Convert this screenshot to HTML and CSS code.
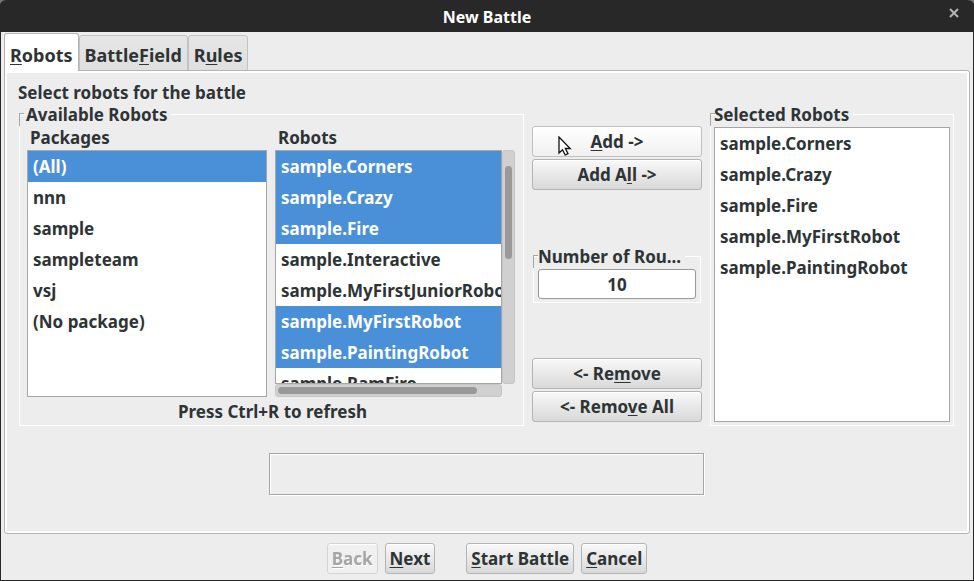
FILE: index.html
```html
<!DOCTYPE html>
<html lang="en">
<head>
<meta charset="utf-8">
<title>New Battle</title>
<link rel="stylesheet" href="styles.css">
</head>
<body>
<div class="window">
  <header class="titlebar">
    <h1 class="title">New Battle</h1>
    <button class="close" type="button" aria-label="Close">
      <svg width="10" height="10" viewBox="0 0 10 10"><path d="M1 1l8 8M9 1l-8 8" stroke="#b4b4b4" stroke-width="2" fill="none"/></svg>
    </button>
  </header>

  <nav class="tabs" role="tablist">
    <button class="tab tab-active" type="button" role="tab" aria-selected="true"><u>R</u>obots</button>
    <button class="tab" type="button" role="tab">Battle<u>F</u>ield</button>
    <button class="tab" type="button" role="tab">R<u>u</u>les</button>
  </nav>

  <main class="panel">
    <p class="prompt">Select robots for the battle</p>
    <div class="columns">
      <fieldset class="group available">
        <legend>Available Robots</legend>
        <div class="lists">
          <div class="list-column">
            <label for="packages">Packages</label>
            <select class="list packages" id="packages" multiple>
              <option selected>(All)</option>
              <option>nnn</option>
              <option>sample</option>
              <option>sampleteam</option>
              <option>vsj</option>
              <option>(No package)</option>
            </select>
          </div>
          <div class="list-column">
            <label for="robots">Robots</label>
            <div class="scroll-area">
              <select class="list" id="robots" multiple>
                <option selected>sample.Corners</option>
                <option selected>sample.Crazy</option>
                <option selected>sample.Fire</option>
                <option>sample.Interactive</option>
                <option>sample.MyFirstJuniorRobot</option>
                <option selected>sample.MyFirstRobot</option>
                <option selected>sample.PaintingRobot</option>
                <option>sample.RamFire</option>
              </select>
              <div class="track track-vertical"><div class="thumb"></div></div>
              <div class="track track-horizontal"><div class="thumb"></div></div>
            </div>
          </div>
        </div>
        <p class="hint">Press Ctrl+R to refresh</p>
      </fieldset>

      <div class="actions">
        <div class="button-stack">
          <button class="button button-hover" type="button"><u>A</u>dd -&gt;
            <svg class="pointer" width="14" height="20" viewBox="0 0 14 20"><path d="M1 1v16l3.500-3.200 2.700 5.200 2.800-1.300-2.600-5.200h4.800z" fill="#fff" stroke="#111" stroke-width="1.300"/></svg>
          </button>
          <button class="button" type="button">Add A<u>l</u>l -&gt;</button>
        </div>
        <fieldset class="group rounds">
          <legend><label for="rounds">Number of Rou...</label></legend>
          <input id="rounds" type="text" value="10">
        </fieldset>
        <div class="button-stack">
          <button class="button" type="button">&lt;- Re<u>m</u>ove</button>
          <button class="button" type="button">&lt;- Remo<u>v</u>e All</button>
        </div>
      </div>

      <fieldset class="group selected">
        <legend><label for="selected">Selected Robots</label></legend>
        <select class="list" id="selected" multiple>
          <option>sample.Corners</option>
          <option>sample.Crazy</option>
          <option>sample.Fire</option>
          <option>sample.MyFirstRobot</option>
          <option>sample.PaintingRobot</option>
        </select>
      </fieldset>
    </div>
    <div class="description"></div>
  </main>

  <footer class="footer">
    <button class="button" type="button" disabled><u>B</u>ack</button>
    <button class="button" type="button"><u>N</u>ext</button>
    <button class="button start" type="button"><u>S</u>tart Battle</button>
    <button class="button" type="button"><u>C</u>ancel</button>
  </footer>
</div>
</body>
</html>
```
FILE: styles.css
```css
* {
  box-sizing: border-box;
}

body {
  margin: 0;
  background: #777;
  color: #2e3436;
}

body,
button,
input,
select,
option {
  font: 700 17px/20px "Noto Sans", "Open Sans", sans-serif;
}

p,
h1 {
  margin: 0;
}

u {
  text-decoration-thickness: 1px;
  text-underline-offset: 2px;
  text-decoration-skip-ink: none;
}

.window {
  display: flex;
  flex-direction: column;
  min-height: 100vh;
  border: 1px solid #282828;
  border-top: 0;
  border-radius: 6px 6px 0 0;
  background: #ededed;
}

.titlebar {
  display: grid;
  grid-template-columns: 30px 1fr 30px;
  align-items: center;
  height: 32px;
  margin: 0 -1px;
  padding-top: 2px;
  border-radius: 6px 6px 0 0;
  background: #282828;
}

.title {
  grid-column: 2;
  color: #fff;
  font-size: 16px;
  line-height: 20px;
  text-align: center;
}

.close {
  display: flex;
  align-self: start;
  padding: 6px 5px;
  border: 0;
  background: none;
}

.tabs {
  display: flex;
  align-items: flex-end;
  height: 39px;
  padding: 0 3px;
}

.tab {
  height: 36px;
  padding: 8px 5px 4px;
  border: 1px solid #c2c2c2;
  border-radius: 3px 3px 0 0;
  background: linear-gradient(#e6e6e6, #dfdfdf);
  color: inherit;
  font-size: 18px;
}

.tab-active {
  z-index: 1;
  height: 38px;
  border-color: #b4b4b4;
  border-bottom: 0;
  background: #fff;
}

.panel {
  flex: 1;
  margin: -1px 3px 0;
  padding: 11px 15px 8px 13px;
  border: 1px solid #b4b4b4;
  border-radius: 0 3px 3px 3px;
  box-shadow: inset 0 0 0 2px #fff;
}

.prompt {
  padding-top: 1px;
}

.columns {
  display: grid;
  grid-template-columns: minmax(0, 505fr) 170px minmax(0, 244fr);
  gap: 8px;
  padding-left: 1px;
}

.group {
  position: relative;
  min-width: 0;
  margin: 0;
  padding: 0 4px 3px 6px;
  border: 1px solid #fff;
}

.group::before {
  position: absolute;
  top: -12px;
  left: -1px;
  width: 4px;
  height: 12px;
  border: solid #a6a6a6;
  border-width: 1px 0 0 1px;
  content: "";
}

legend {
  max-width: 100%;
  padding: 2px 4px 0 0;
  white-space: nowrap;
}

.lists {
  display: grid;
  grid-template-columns: minmax(0, 1fr) minmax(0, 1fr);
  gap: 8px;
  padding: 3px 4px 0 1px;
}

.list-column {
  display: flex;
  flex-direction: column;
  gap: 2px;
}

.list-column label {
  padding-left: 3px;
}

.list {
  flex: 1;
  width: 100%;
  min-width: 0;
  margin: 0;
  padding: 0;
  border: 1px solid #a6a6a6;
  border-radius: 0;
  outline: 0;
  overflow: hidden;
  background: #fff;
  color: inherit;
  scrollbar-width: none;
}

.list option {
  height: 31px;
  min-height: 31px;
  padding: 4px 5px;
}

.list option:checked {
  background: #4a90d9 linear-gradient(#4a90d9, #4a90d9);
  color: #fff;
}

.packages {
  height: 247px;
}

.scroll-area {
  display: grid;
  flex: 1;
  grid-template-rows: 234px 13px;
  grid-template-columns: minmax(0, 1fr) 13px;
}

.scroll-area .list {
  height: 100%;
}

.track {
  border: 1px solid #c6c6c6;
  border-radius: 3px;
  background: #d0d0d0;
}

.track-vertical {
  padding: 15px 2px 0;
}

.track-horizontal {
  padding: 2px 24px 2px 2px;
}

.thumb {
  height: 7px;
  border-radius: 4px;
  background: #999;
}

.track-vertical .thumb {
  height: 93px;
}

.hint {
  padding: 5px 0 0;
  text-align: center;
}

.actions {
  display: flex;
  flex-direction: column;
  justify-content: space-between;
  padding: 23px 0 4px;
}

.button-stack {
  display: flex;
  flex-direction: column;
  gap: 2px;
}

.button {
  position: relative;
  height: 31px;
  padding: 4px 4px;
  border: 1px solid #b4b4b4;
  border-radius: 3px;
  background: linear-gradient(#f8f8f8, #d9d9d9);
  box-shadow: inset 0 1px #fff;
  color: inherit;
  white-space: nowrap;
}

.button-hover {
  border-color: #c0c0c0;
  background: linear-gradient(#fff, #f0f0f0);
}

.button:disabled {
  border-color: #d4d4d4;
  background: #f0f0f0;
  color: #a6a6a6;
  text-shadow: 1px 1px #fff;
}

.pointer {
  position: absolute;
  top: 9px;
  left: 25px;
}

.rounds {
  margin: 0 1px;
  padding: 2px 4px 3px;
}

.rounds input {
  display: block;
  width: 100%;
  height: 30px;
  padding: 0;
  border: 1px solid #999;
  border-radius: 3px;
  background: #fff;
  color: inherit;
  text-align: center;
}

.selected {
  padding: 2px 3px 3px;
}

.selected .list {
  display: block;
  height: 295px;
}

.description {
  width: 46%;
  min-width: 435px;
  height: 42px;
  margin: 27px auto 0;
  border: 1px solid #a6a6a6;
  box-shadow: 1px 1px #fff, inset 1px 1px #fff;
}

.footer {
  display: flex;
  justify-content: center;
  gap: 7px;
  padding: 9px 0 6px;
}

.start {
  margin-left: 24px;
}
```
